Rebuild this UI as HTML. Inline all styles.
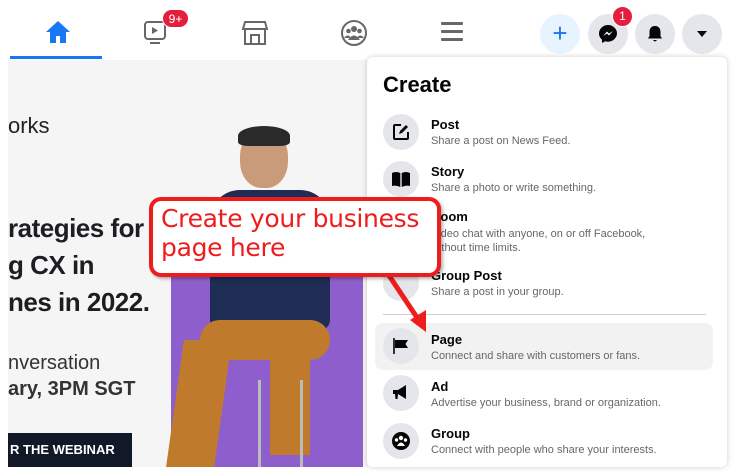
<!DOCTYPE html>
<html><head><meta charset="utf-8"><style>
*{margin:0;padding:0;box-sizing:border-box}
body{width:733px;height:475px;overflow:hidden;background:#fff;font-family:"Liberation Sans",sans-serif;position:relative}
.abs{position:absolute}
.gray{left:8px;top:60px;width:360px;height:407px;background:#f5f5f5}
.head{color:#1c1e21;font-weight:bold}
.panel{left:367px;top:57px;width:360px;height:410px;background:#fff;box-shadow:0 0 6px rgba(0,0,0,.2);border-radius:6px}
.ic{position:absolute;left:383px;width:36px;height:36px;border-radius:50%;background:#e4e6eb}
.t{position:absolute;left:431px;font-size:13px;color:#050505;font-weight:bold}
.d{position:absolute;left:431px;font-size:11px;color:#65676b}
.circ{position:absolute;width:40px;height:40px;border-radius:50%;background:#e4e6eb;top:14px}
</style></head><body>
<!-- top nav -->
<div class="abs" style="left:10px;top:56px;width:92px;height:3px;background:#1877f2"></div>
<svg class="abs" style="left:45px;top:20px" width="26" height="24" viewBox="0 0 26 24"><path d="M13 1 L1 12 H5 V23 H11 V16 H15 V23 H21 V12 H25 Z" fill="#1877f2"/></svg>
<svg class="abs" style="left:143px;top:20px" width="28" height="26" viewBox="0 0 28 26"><rect x="2" y="2" width="20" height="17" rx="3" fill="none" stroke="#65676b" stroke-width="2"/><path d="M9 7 L15 10.5 L9 14Z" fill="#65676b"/><path d="M7 23 H17" stroke="#65676b" stroke-width="2"/></svg>
<div class="abs" style="left:162px;top:9px;width:27px;height:19px;border-radius:10px;background:#e41e3f;color:#fff;font-size:12px;text-align:center;line-height:19px;border:1.5px solid #fff">9+</div>
<svg class="abs" style="left:242px;top:20px" width="26" height="26" viewBox="0 0 26 26"><path d="M3 2 H23 L25 9 H1 Z M3 9 V24 H23 V9 M9 24 V15 H17 V24" fill="none" stroke="#65676b" stroke-width="2"/></svg>
<svg class="abs" style="left:340px;top:19px" width="28" height="28" viewBox="0 0 28 28"><circle cx="14" cy="14" r="12" fill="none" stroke="#65676b" stroke-width="2"/><circle cx="14" cy="10" r="3" fill="#65676b"/><circle cx="8.5" cy="12" r="2.3" fill="#65676b"/><circle cx="19.5" cy="12" r="2.3" fill="#65676b"/><path d="M8 21 Q14 12 20 21Z M4 19 Q8 14 11 19Z M17 19 Q20 14 24 19Z" fill="#65676b"/></svg>
<div class="abs" style="left:441px;top:22px;width:22px;height:3px;background:#65676b;box-shadow:0 8px 0 #65676b,0 16px 0 #65676b;border-radius:1px"></div>
<div class="circ" style="left:540px;background:#e7f3ff"></div>
<div class="abs" style="left:550px;top:20px;font-size:26px;color:#1877f2;line-height:26px;width:20px;text-align:center">+</div>
<div class="circ" style="left:588px"></div>
<svg class="abs" style="left:598px;top:24px" width="20" height="20" viewBox="0 0 20 20"><path d="M10 1 C5 1 1 4.8 1 9.5 C1 12 2.2 14.2 4 15.6 V19 L7.3 17.3 C8.2 17.6 9.1 17.7 10 17.7 C15 17.7 19 13.9 19 9.3 C19 4.8 15 1 10 1Z" fill="#050505"/><path d="M5 12 L9 7.5 L11 9.5 L15 7 L11 11.5 L9 9.5Z" fill="#fff"/></svg>
<div class="abs" style="left:612px;top:6px;width:21px;height:21px;border-radius:50%;background:#e41e3f;color:#fff;font-size:12px;text-align:center;line-height:18px;border:1.5px solid #fff">1</div>
<div class="circ" style="left:635px"></div>
<svg class="abs" style="left:646px;top:25px" width="18" height="18" viewBox="0 0 18 18"><path d="M9 1 C5 1 3.5 4 3.5 7 V11 L2 13.5 H16 L14.5 11 V7 C14.5 4 13 1 9 1Z M7 15 H11 Q9 18 7 15Z" fill="#050505"/></svg>
<div class="circ" style="left:682px"></div>
<div class="abs" style="left:697px;top:31px;width:0;height:0;border-left:5px solid transparent;border-right:5px solid transparent;border-top:6px solid #050505"></div>

<!-- content -->
<div class="abs gray"></div>
<div class="abs" style="left:8px;top:113px;font-size:22px;color:#222">orks</div>
<div class="abs head" style="left:8px;top:210px;font-size:26px;line-height:37px;letter-spacing:-0.5px">rategies for<br>g CX in<br>nes in 2022.</div>
<div class="abs" style="left:8px;top:350px;font-size:20px;color:#333;line-height:26px">nversation<br><b>ary, 3PM SGT</b></div>
<div class="abs" style="left:8px;top:433px;width:124px;height:34px;background:#111827;color:#fff;font-weight:bold;font-size:13px;line-height:34px;padding-left:2px">R THE WEBINAR</div>
<div class="abs" style="left:171px;top:240px;width:192px;height:227px;background:#8e5fcc"></div>
<!-- person approx -->
<div class="abs" style="left:240px;top:130px;width:48px;height:58px;border-radius:45%;background:#c99b7a"></div>
<div class="abs" style="left:238px;top:126px;width:52px;height:20px;border-radius:50% 50% 20% 20%;background:#2a2a2a"></div>
<div class="abs" style="left:210px;top:190px;width:120px;height:140px;border-radius:30px 30px 10px 10px;background:#1f2d55"></div>
<div class="abs" style="left:200px;top:320px;width:130px;height:40px;border-radius:20px;background:#c07a2c"></div>
<div class="abs" style="left:175px;top:340px;width:48px;height:127px;background:#c07a2c;transform:skewX(-8deg)"></div>
<div class="abs" style="left:270px;top:345px;width:40px;height:110px;background:#c07a2c"></div>
<div class="abs" style="left:258px;top:380px;width:3px;height:87px;background:#bbb"></div>
<div class="abs" style="left:300px;top:380px;width:3px;height:87px;background:#bbb"></div>

<!-- panel -->
<div class="abs panel"></div>
<div class="abs" style="left:383px;top:72px;font-size:22px;font-weight:bold;color:#050505">Create</div>
<div class="abs" style="left:375px;top:323px;width:338px;height:47px;background:#f2f2f2;border-radius:8px"></div>
<div class="abs" style="left:383px;top:314px;width:323px;height:1px;background:#ced0d4"></div>

<div class="ic" style="top:114px"></div>
<svg class="abs" style="left:392px;top:123px" width="18" height="18" viewBox="0 0 18 18"><path d="M9 2 H3 Q2 2 2 3 V15 Q2 16 3 16 H15 Q16 16 16 15 V9" fill="none" stroke="#050505" stroke-width="2"/><path d="M7 11 L8 8 L14 2 L16 4 L10 10Z" fill="#050505"/></svg>
<div class="t" style="top:117px">Post</div><div class="d" style="top:135px">Share a post on News Feed.</div>

<div class="ic" style="top:161px"></div>
<svg class="abs" style="left:391px;top:171px" width="20" height="16" viewBox="0 0 20 16"><path d="M1 2 Q5 0 9.3 2 V16 Q5 14 1 15Z M10.7 2 Q15 0 19 2 V15 Q15 14 10.7 16Z" fill="#050505"/></svg>
<div class="t" style="top:164px">Story</div><div class="d" style="top:182px">Share a photo or write something.</div>

<div class="ic" style="top:208px"></div>
<div class="t" style="top:209px">Room</div><div class="d" style="top:227px;line-height:14px">Video chat with anyone, on or off Facebook,<br>without time limits.</div>

<div class="ic" style="top:265px"></div>
<div class="t" style="top:268px">Group Post</div><div class="d" style="top:286px">Share a post in your group.</div>

<div class="ic" style="top:328px"></div>
<svg class="abs" style="left:392px;top:337px" width="18" height="18" viewBox="0 0 18 18"><path d="M2 1 V17" stroke="#050505" stroke-width="1.6"/><path d="M3 3 H16 L13.5 7 L16 11 H3Z" fill="#050505"/></svg>
<div class="t" style="top:332px">Page</div><div class="d" style="top:350px">Connect and share with customers or fans.</div>

<div class="ic" style="top:375px"></div>
<svg class="abs" style="left:391px;top:384px" width="20" height="18" viewBox="0 0 20 18"><path d="M2 6 H7 L15 1 V15 L7 10 H2Z" fill="#050505"/><path d="M4 10 H7 L6.5 15 H4.5Z" fill="#050505"/></svg>
<div class="t" style="top:379px">Ad</div><div class="d" style="top:397px">Advertise your business, brand or organization.</div>

<div class="ic" style="top:423px"></div>
<svg class="abs" style="left:391px;top:431px" width="20" height="20" viewBox="0 0 20 20"><circle cx="10" cy="10" r="9" fill="#050505"/><circle cx="10" cy="7" r="2.2" fill="#fff"/><circle cx="5.5" cy="9" r="1.7" fill="#fff"/><circle cx="14.5" cy="9" r="1.7" fill="#fff"/><path d="M6 15 Q10 8 14 15Z" fill="#fff"/></svg>
<div class="t" style="top:426px">Group</div><div class="d" style="top:444px">Connect with people who share your interests.</div>

<!-- callout -->
<svg class="abs" style="left:380px;top:270px" width="60" height="70" viewBox="0 0 60 70"><path d="M8 4 L40 52" stroke="#ee1c1c" stroke-width="5"/><path d="M30 50 L46 62 L46 40Z" fill="#ee1c1c"/></svg>
<div class="abs" style="left:149px;top:197px;width:292px;height:80px;border:4px solid #ee1c1c;border-radius:12px;background:#fff;box-shadow:2px 2px 3px rgba(0,0,0,.3)"></div>
<div class="abs" style="left:161px;top:204px;font-size:25px;line-height:29px;color:#ee1c1c;font-family:'DejaVu Sans','Liberation Sans',sans-serif;letter-spacing:-0.3px">Create your business<br>page here</div>
</body></html>
